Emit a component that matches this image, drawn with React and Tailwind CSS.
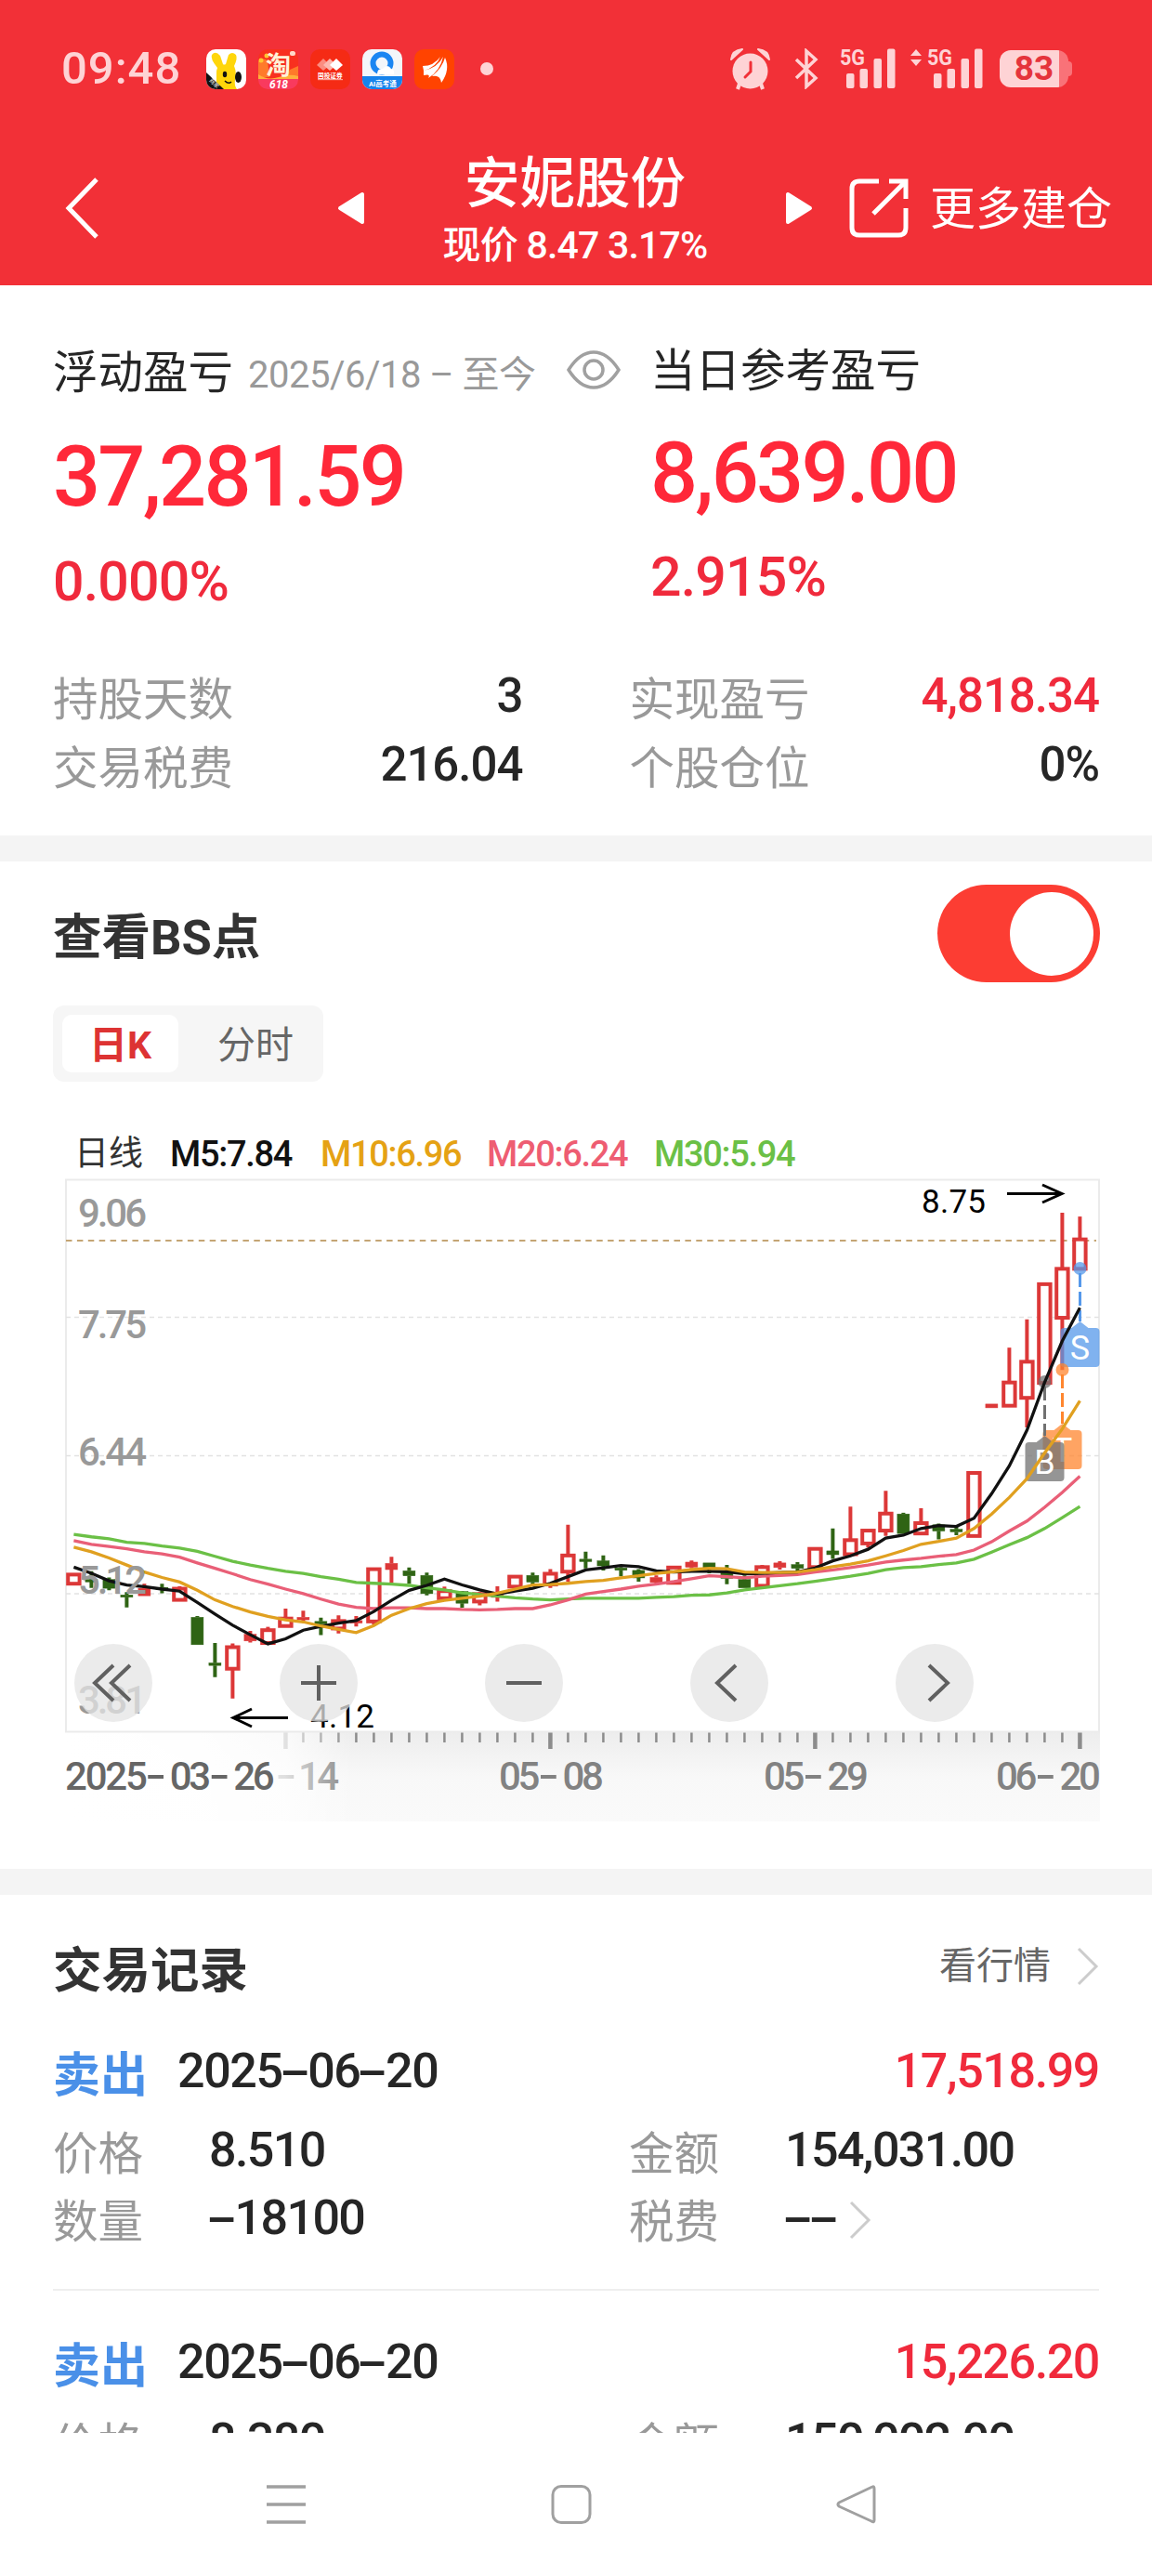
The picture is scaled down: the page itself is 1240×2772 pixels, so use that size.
import { Fragment } from 'react'

const STEP = 19
const X0 = 79.4
const cx = i => X0 + i * STEP
const cy = v => v / 2.24

// kind: r = hollow up, f = filled up, g = down | high, body top, body bottom, low
const candles = [
  ['r', 971, 973, 995, 998], ['g', 965, 985, 990, 1005], ['g', 980, 985, 1006, 1011], ['g', 1015, 1022, 1027, 1052],
  ['f', 995, 1006, 1024, 1024], ['g', 995, 1004, 1009, 1018], ['r', 1001, 1007, 1034, 1034], ['g', 1073, 1076, 1142, 1142],
  ['g', 1138, 1186, 1192, 1220], ['r', 1139, 1148, 1200, 1272], ['f', 1109, 1117, 1133, 1137], ['r', 1099, 1107, 1138, 1138],
  ['r', 1055, 1079, 1097, 1097], ['f', 1060, 1076, 1082, 1085], ['g', 1077, 1086, 1092, 1119], ['r', 1071, 1085, 1103, 1115],
  ['f', 1073, 1084, 1090, 1098], ['r', 957, 960, 1086, 1093], ['f', 930, 946, 961, 993], ['g', 956, 964, 976, 995],
  ['g', 968, 975, 1019, 1023], ['r', 1002, 1013, 1030, 1030], ['g', 1013, 1014, 1042, 1053], ['r', 1015, 1020, 1038, 1047],
  ['f', 1001, 1015, 1028, 1038], ['r', 978, 978, 1002, 1002], ['g', 968, 975, 991, 1000], ['r', 960, 971, 997, 1005],
  ['r', 853, 927, 966, 990], ['g', 918, 936, 941, 958], ['g', 927, 940, 952, 963], ['g', 955, 957, 962, 977],
  ['g', 960, 963, 981, 990], ['f', 975, 980, 992, 997], ['r', 953, 956, 993, 995], ['f', 939, 943, 955, 958],
  ['g', 945, 945, 958, 970], ['g', 950, 966, 982, 996], ['g', 975, 985, 1005, 1005], ['r', 950, 955, 1000, 1000],
  ['f', 941, 945, 956, 961], ['g', 943, 949, 958, 965], ['r', 909, 911, 955, 960], ['g', 862, 916, 925, 935],
  ['r', 809, 890, 924, 927], ['r', 865, 867, 898, 908], ['r', 771, 826, 867, 880], ['g', 824, 827, 874, 874],
  ['r', 813, 849, 874, 878], ['g', 850, 853, 868, 888], ['g', 855, 864, 870, 878], ['r', 727, 728, 880, 880],
  ['f', 562, 562, 571, 571], ['r', 426, 510, 566, 566], ['r', 358, 460, 547, 618], ['r', 270, 273, 511, 511],
  ['r', 101, 236, 354, 480], ['r', 110, 165, 236, 236],
]

const averages = [
  { color: '#6bc046', values: [876, 882, 887, 895, 898, 904, 909, 917, 929, 941, 950, 958, 965, 970, 978, 984, 992, 994, 996, 999, 1005, 1010, 1017, 1021, 1025, 1029, 1032, 1034, 1032, 1030, 1030, 1030, 1030, 1028, 1026, 1023, 1022, 1017, 1010, 1005, 1000, 995, 989, 983, 977, 970, 961, 956, 954, 949, 945, 936, 919, 901, 884, 862, 836, 809] },
  { color: '#e95f77', values: [891, 900, 905, 911, 918, 923, 931, 945, 958, 971, 985, 996, 1008, 1019, 1032, 1044, 1052, 1055, 1053, 1053, 1055, 1055, 1057, 1058, 1057, 1055, 1055, 1046, 1034, 1020, 1014, 1008, 1001, 996, 990, 983, 976, 978, 981, 977, 975, 973, 967, 962, 956, 950, 943, 938, 934, 929, 925, 914, 894, 868, 844, 811, 775, 736] },
  { color: '#111111', values: [955, 970, 988, 998, 1002, 1008, 1013, 1040, 1068, 1095, 1118, 1140, 1128, 1107, 1098, 1090, 1084, 1062, 1035, 1011, 999, 984, 998, 1010, 1020, 1013, 1006, 994, 978, 962, 957, 951, 954, 964, 967, 965, 965, 966, 971, 970, 968, 967, 957, 940, 928, 912, 885, 878, 862, 855, 857, 837, 778, 711, 625, 510, 410, 330] },
  { color: '#e0a020', values: [907, 918, 933, 950, 967, 980, 991, 1011, 1034, 1050, 1063, 1074, 1082, 1087, 1097, 1105, 1113, 1096, 1071, 1055, 1043, 1035, 1030, 1025, 1018, 1008, 998, 997, 994, 990, 987, 981, 976, 970, 966, 961, 958, 959, 967, 968, 968, 967, 961, 954, 948, 940, 928, 915, 900, 893, 885, 862, 827, 787, 742, 680, 622, 554] },
]

const priceLabels = [['9.06', 60], ['7.75', 180], ['6.44', 317], ['5.12', 455], ['3.81', 584]]
const dateLabels = [['05-08', 537], ['05-29', 822], ['06-20', 1072]]

const legend = [
  ['M5:7.84', 'text-[#111111] w-[162px]'],
  ['M10:6.96', 'text-[#e5a214] w-[179px]'],
  ['M20:6.24', 'text-[#ee5d72] w-[180px]'],
  ['M30:5.94', 'text-[#6bc046]'],
]

const records = [
  { date: '2025-06-20', profit: '17,518.99', price: '8.510', amount: '154,031.00', count: '-18100' },
  { date: '2025-06-20', profit: '15,226.20', price: '8.380', amount: '150,002.00', count: '-17900' },
]

// Hyphens are as wide as a digit in this type
const Num = ({ children, className = '' }) => (
  <span className={`font-medium whitespace-nowrap ${className}`}>
    {children.split('-').map((part, i) => (
      <Fragment key={i}>
        {i > 0 && <span className="inline-block w-[0.53em] text-center tracking-normal scale-x-[1.9]">-</span>}
        {part}
      </Fragment>
    ))}
  </span>
)

const Chevron = ({ className }) => (
  <svg viewBox="0 0 24 42" className={`w-6 h-[42px] ${className}`} fill="none" stroke="#cccccc" strokeWidth="3">
    <path d="M2 2 L21 21 L2 40" />
  </svg>
)

const Signal = () => (
  <svg width="62" height="44" viewBox="0 0 62 44" fill="#fed3d5">
    <text x="0" y="18" fontSize="23" fontWeight="700" textLength="27" lengthAdjust="spacingAndGlyphs">5G</text>
    <rect x="7" y="27" width="8.5" height="16" rx="2" />
    <rect x="21.5" y="22" width="8.5" height="21" rx="2" />
    <rect x="36.5" y="11" width="8.5" height="32" rx="2" />
    <rect x="51" y="0.5" width="8.5" height="42.5" rx="2" />
  </svg>
)

const AppIcons = () => (
  <div className="flex gap-[13px] ml-[29px]">
    <svg width="43" height="43" viewBox="0 0 43 43" className="rounded-[10px] bg-white">
      <path d="M11 43 L11 26 Q11 22 12 20 Q4 10 6 6 Q10 1 15 7 L18 16 Q19 17 21 16 L24 6 Q28 2 32 6 Q34 10 30 18 Q33 25 31 33 Q30 39 33 43 Z" fill="#ffd60a" />
      <path d="M0 25 L19 43 H0 Z" fill="#111" />
      <ellipse cx="20" cy="27" rx="2.2" ry="3.2" fill="#111" />
      <ellipse cx="34.5" cy="30" rx="3.5" ry="6" fill="#111" />
      <path d="M20 34 Q24 38 27 35" stroke="#111" strokeWidth="1.5" fill="none" />
      <text x="3" y="34" fontSize="6" fill="#fff" transform="rotate(44 3 34)">商家</text>
    </svg>
    <svg width="43" height="43" viewBox="0 0 43 43" className="rounded-[10px] bg-[#f8301f]">
      <path d="M0 13 Q4 8 10 12 L12 30 H0 Z" fill="#ff7a2a" />
      <path d="M43 18 L34 22 L30 32 H43 Z" fill="#ff7a2a" />
      <circle cx="9" cy="7" r="2.5" fill="#ffc531" />
      <circle cx="3" cy="12" r="2.5" fill="#ffc531" />
      <rect x="34" y="2" width="6" height="5" rx="2" fill="#ffd9c9" />
      <path d="M0 27 Q10 34 22 30 Q34 26 43 29 V33 H0 Z" fill="#ffb03b" />
      <rect y="32" width="43" height="11" fill="#f93a5e" />
      <text x="8" y="27" fontSize="27" fontWeight="700" fill="#fff3d8">淘</text>
      <text x="12" y="42" fontSize="12" fontStyle="italic" fontWeight="700" fill="#fff">618</text>
    </svg>
    <svg width="43" height="43" viewBox="0 0 43 43" className="rounded-[10px] bg-[#f52b15]">
      <path d="M7 17 L14 10 L21 17 L14 23 Z" fill="#fb8d80" />
      <path d="M14 17 L21 10 L28 17 L21 23 Z" fill="#fcb8af" />
      <path d="M21 17 L28 10 L35 17 L28 23 Z" fill="#fff" />
      <text x="8" y="31" fontSize="6.7" fontWeight="700" fill="#fff">国投证券</text>
      <rect x="8" y="32" width="27" height="1.2" fill="#fb9d92" />
    </svg>
    <svg width="43" height="43" viewBox="0 0 43 43" className="rounded-[10px] bg-[#f3f6fa]">
      <circle cx="21" cy="15" r="9.5" fill="none" stroke="#1b86f2" strokeWidth="6" />
      <path d="M16 27 Q16 20 22 21 Q27 15 31 21 Q35 22 34 27 H16 Z" fill="#fff" />
      <rect y="29" width="43" height="14" fill="#1683ec" />
      <text x="7" y="40" fontSize="7.5" fontWeight="700" fill="#fff">AI高考通</text>
    </svg>
    <svg width="43" height="43" viewBox="0 0 43 43" className="rounded-[10px] bg-[#ff4300]">
      <path d="M9 18 Q21 18 28 8 Q24 19 10 23 Z M10 23 Q25 20 31 8 Q28 23 15 31 Q18 26 10 28 Z M19 29 Q30 20 33 9 Q39 22 29 36 Q28 27 19 29 Z" fill="#fff" />
    </svg>
  </div>
)

const StatusBar = () => (
  <div className="flex items-center h-[148px] pl-[66px] text-[#fed3d5]">
    <span className="w-[127px] text-[49px] font-medium tracking-[1px]">09:48</span>
    <AppIcons />
    <span className="size-3.5 rounded-full bg-[#fed3d5] ml-7" />
    <div className="flex items-center ml-[255px]">
      <svg width="43" height="45" viewBox="0 0 43 45" fill="#fed3d5">
        <circle cx="21.5" cy="24.5" r="19" />
        <path d="M1 12 Q2 2 13 1 L1 12 Z M42 12 Q41 2 30 1 L42 12 Z" stroke="#fed3d5" strokeWidth="2" strokeLinejoin="round" />
        <path d="M10 38 L8 44 M33 38 L35 44" stroke="#fed3d5" strokeWidth="4" />
        <path d="M22 15 V25 L16 31" fill="none" stroke="#f13037" strokeWidth="3" strokeLinecap="round" />
      </svg>
      <svg width="26" height="44" viewBox="0 0 26 44" className="ml-[26px]" fill="none" stroke="#fed3d5" strokeWidth="3.5">
        <path d="M2 12 L23 32 L13 41 V3 L23 12 L2 32" />
      </svg>
      <div className="ml-[23px]"><Signal /></div>
      <svg width="12" height="18" viewBox="0 0 12 18" className="ml-[14px] mb-6" fill="#fed3d5">
        <path d="M0 7 L6 0 L12 7 Z M0 11 L6 18 L12 11 Z" />
      </svg>
      <div className="ml-1.5"><Signal /></div>
      <div className="flex items-center ml-4">
        <div className="flex items-center justify-center w-[74px] h-10 rounded-xl bg-linear-to-r from-[#fed3d5] from-[86%] to-[#f97278] to-[86%]">
          <span className="text-[37px] leading-10 font-bold text-[#e5343c]">83</span>
        </div>
        <span className="w-1 h-4 rounded-r bg-[#f97278]" />
      </div>
    </div>
  </div>
)

const Header = () => (
  <header className="h-[307px] bg-[#f23037] text-white">
    <StatusBar />
    <div className="flex items-center h-[152px] pl-[70px]">
      <svg width="36" height="66" viewBox="0 0 36 66" fill="none" stroke="#fff" strokeWidth="5">
        <path d="M34 2 L4 33 L34 64" />
      </svg>
      <svg width="31" height="36" viewBox="0 0 31 36" className="ml-64" fill="#fff" stroke="#fff" strokeWidth="4" strokeLinejoin="round">
        <path d="M28 3 V33 L4 18 Z" />
      </svg>
      <div className="flex flex-col items-center w-[452px] mt-3">
        <h1 className="text-[59.5px] leading-[68px] font-medium">安妮股份</h1>
        <p className="text-[41px] leading-[64px] font-medium tracking-[-0.8px]">现价 8.47 3.17%</p>
      </div>
      <svg width="31" height="36" viewBox="0 0 31 36" fill="#fff" stroke="#fff" strokeWidth="4" strokeLinejoin="round">
        <path d="M3 3 V33 L27 18 Z" />
      </svg>
      <svg width="66" height="64" viewBox="0 0 66 64" className="ml-[38px]" fill="none" stroke="#fff" strokeWidth="5">
        <path d="M32 3 H11 Q3 3 3 11 V53 Q3 61 11 61 H53 Q61 61 61 53 V32" />
        <path d="M43 3 H61 V22 M61 3 L26 38" />
      </svg>
      <span className="ml-[21px] pt-1 text-[49px] leading-[60px] whitespace-nowrap">更多建仓</span>
    </div>
  </header>
)

const Metric = ({ label, value, red }) => (
  <div className="flex items-center justify-between h-[74px]">
    <span className="pt-[7px] text-[48.5px] leading-[60px] text-[#999999]">{label}</span>
    <Num className={`pb-0.5 text-[51px] leading-[60px] tracking-[-1px] ${red ? 'text-[#f02a3c]' : 'text-[#262626]'}`}>{value}</Num>
  </div>
)

const Summary = () => (
  <section className="h-[592px] px-[57px]">
    <div className="flex h-[348px]">
      <div className="w-[643px] pt-[63px]">
        <div className="flex items-center h-[60px]">
          <span className="pt-[3px] text-[48.5px] leading-[60px] text-[#262626]">浮动盈亏</span>
          <span className="ml-4 pt-2 text-[40px] leading-[54px] tracking-[-0.5px] text-[#999999] whitespace-nowrap">2025/6/18 – 至今</span>
          <svg width="58" height="42" viewBox="0 0 58 42" className="ml-auto mr-8 -mt-1" fill="none" stroke="#a0a0a0" strokeWidth="3.5">
            <path d="M2 21 Q14 2 29 2 Q44 2 56 21 Q44 40 29 40 Q14 40 2 21 Z" />
            <circle cx="29" cy="21" r="10" />
          </svg>
        </div>
        <p className="mt-[34px] text-[90px] leading-[100px] font-medium tracking-[-2.8px] text-[#ff2839]">37,281.59</p>
        <p className="mt-[31px] text-[59px] leading-[61px] font-medium tracking-[-0.8px] text-[#f02a3c]">0.000%</p>
      </div>
      <div className="pt-[61px]">
        <p className="pt-[3px] text-[48.5px] leading-[57px] text-[#262626]">当日参考盈亏</p>
        <p className="mt-8 text-[90px] leading-[100px] font-medium tracking-[-2.8px] text-[#ff2839]">8,639.00</p>
        <p className="mt-[31px] text-[59px] leading-[60px] font-medium tracking-[-0.8px] text-[#f02a3c]">2.915%</p>
      </div>
    </div>
    <div className="grid grid-cols-2 gap-x-[115px] mt-[58px]">
      <Metric label="持股天数" value="3" />
      <Metric label="实现盈亏" value="4,818.34" red />
      <Metric label="交易税费" value="216.04" />
      <Metric label="个股仓位" value="0%" />
    </div>
  </section>
)

const Marker = ({ x, y, dotY, color, letter }) => (
  <g>
    <circle cx={x} cy={dotY} r="7" fill={color} fillOpacity="0.75" />
    <path d={`M${x} ${dotY + 5} V${y}`} stroke={color} strokeWidth="3" strokeDasharray="15 5" />
    <path d={`M${x} ${y} l9 7 h8 q4 0 4 4 v34 q0 4 -4 4 h-34 q-4 0 -4 -4 v-34 q0 -4 4 -4 h8 Z`} fill={color} fillOpacity="0.75" />
    <text x={x} y={y + 41} textAnchor="middle" fontSize="36" fill="#fff">{letter}</text>
  </g>
)

const RoundButton = ({ x, d }) => (
  <g>
    <circle cx={x} cy="551" r="42" fill="#e4e4e4" fillOpacity="0.75" />
    <path d={d} transform={`translate(${x} 551)`} fill="none" stroke="#606060" strokeWidth="4" />
  </g>
)

// Each part and each hyphen gets its own width
const DateLabel = ({ x, children, fill }) => {
  let left = x
  return (
    <g fontSize="42" fontWeight="500" fill={fill}>
      {children.split('-').map((part, i) => {
        const width = part.length * 22.2
        const dash = left - 2
        if (i > 0) left += 24
        const start = left
        left += width
        return (
          <Fragment key={i}>
            {i > 0 && <text x={dash} y="665" textLength="22" lengthAdjust="spacingAndGlyphs">-</text>}
            <text x={start} y="666" textLength={width}>{part}</text>
          </Fragment>
        )
      })}
    </g>
  )
}

const Chart = () => (
  <svg width="1240" height="700" viewBox="0 0 1240 700" className="block">
    <defs>
      <linearGradient id="axisFade" x1="0" x2="0" y1="0" y2="1">
        <stop offset="0" stopColor="#ededed" />
        <stop offset="0.5" stopColor="#f8f8f8" />
        <stop offset="1" stopColor="#fafafa" />
      </linearGradient>
      <linearGradient id="leftFade">
        <stop offset="0" stopColor="#fff" />
        <stop offset="0.45" stopColor="#fff" stopOpacity="0.95" />
        <stop offset="0.76" stopColor="#fff" stopOpacity="0.75" />
        <stop offset="1" stopColor="#fff" stopOpacity="0" />
      </linearGradient>
    </defs>

    {/* Date axis */}
    <rect x="71" y="604" width="1113" height="96" fill="url(#axisFade)" />
    {candles.map((_, i) => i >= 12 && (
      <path key={i} d={`M${cx(i)} 604 v${(i - 12) % 15 === 0 ? 18 : 11}`} stroke="#8c8c8c" strokeWidth={(i - 12) % 15 === 0 ? 4.5 : 2.5} />
    ))}
    <text x="297" y="665" fontSize="42" fontWeight="500" fill="#828282" textLength="22" lengthAdjust="spacingAndGlyphs">-</text>
    <text x="321" y="666" fontSize="42" fontWeight="500" fill="#828282" textLength="44">14</text>
    <rect x="71" y="604" width="310" height="96" fill="url(#leftFade)" />

    {/* Frame and grid */}
    <rect x="71" y="9.5" width="1112" height="594" fill="none" stroke="#ebebeb" strokeWidth="2" />
    {[157.5, 306.5, 455].map(y => (
      <path key={y} d={`M71 ${y} H1183`} stroke="#e2e2e2" strokeWidth="1.5" strokeDasharray="5 4" />
    ))}
    <path d="M71 75 H1180" stroke="#c4a574" strokeWidth="1.8" strokeDasharray="6.5 5.4" />

    {candles.map(([kind, high, top, bottom, low], i) => {
      const x = cx(i)
      const color = kind === 'g' ? '#2f6414' : '#dc3838'
      const hollow = kind === 'r'
      const h = Math.max(cy(bottom - top), 2.5)
      return (
        <g key={i} stroke={color} fill={color}>
          <path d={`M${x} ${cy(high)} V${cy(top)} M${x} ${cy(bottom)} V${cy(low)}`} strokeWidth="4" />
          {hollow
            ? <rect x={x - 6.2} y={cy(top)} width="12.4" height={h} fill="#fff" strokeWidth="4" />
            : <rect x={x - 6.5} y={cy(top)} width="13" height={h} strokeWidth="0.5" />}
        </g>
      )
    })}

    <Marker x={1162.5} y={162} dotY={105} color="#5598ea" letter="S" />
    <Marker x={1143.5} y={272} dotY={214} color="#ff862f" letter="T" />
    <Marker x={1124.5} y={285} dotY={227} color="#717171" letter="B" />

    {averages.map(({ color, values }) => (
      <polyline key={color} points={values.map((v, i) => `${cx(i)},${cy(v)}`).join(' ')} fill="none" stroke={color} strokeWidth="3.3" />
    ))}

    {priceLabels.map(([label, y]) => (
      <text key={label} x="84" y={y} fontSize="42" fontWeight="500" fill="#999999" textLength="74">{label}</text>
    ))}

    {/* High and low annotations */}
    <text x="992" y="45" fontSize="35" textLength="69">8.75</text>
    <path d="M1084 24.5 H1142 M1122 15 L1143 24.5 L1122 34" fill="none" stroke="#000" strokeWidth="3" />
    <text x="334" y="599" fontSize="35" textLength="69">4.12</text>
    <path d="M310 588.5 H252 M271 579 L251 588.5 L271 598" fill="none" stroke="#000" strokeWidth="3" />

    <RoundButton x={122} d="M0 -19 L-20 0 L0 19 M18 -19 L-2 0 L18 19" />
    <RoundButton x={343} d="M-19 0 H19 M0 -19 V19" />
    <RoundButton x={564} d="M-19 0 H19" />
    <RoundButton x={785} d="M7 -19 L-13 0 L7 19" />
    <RoundButton x={1006} d="M-6 -19 L14 0 L-6 19" />

    <DateLabel x={70} fill="#666666">2025-03-26</DateLabel>
    {dateLabels.map(([label, x]) => (
      <DateLabel key={label} x={x} fill="#828282">{label}</DateLabel>
    ))}
  </svg>
)

const ChartSection = () => (
  <section className="h-[1084px] pt-[25px]">
    <div className="flex items-center justify-between h-[105px] pl-[57px] pr-14">
      <h2 className="pt-2 text-[52.5px] leading-[60px] font-bold text-[#333333]">查看BS点</h2>
      <div className="flex items-center justify-end w-[175px] h-[105px] pr-[7px] rounded-full bg-[#fc3d33]">
        <span className="size-[90px] rounded-full bg-white" />
      </div>
    </div>
    <div className="flex items-center w-[291px] h-[82px] ml-[57px] mt-[25px] p-2.5 rounded-xl bg-[#f6f6f6] text-[41px] leading-[58px]">
      <span className="flex items-center justify-center w-[125px] h-[62px] pt-1 rounded-[10px] bg-white font-bold text-[#dd3333]">日K</span>
      <span className="ml-[42px] pt-1 text-[#666666]">分时</span>
    </div>
    <div className="flex items-center h-[42px] mt-[54px] pt-1 pl-[80px] text-[38px] leading-[42px]">
      <span className="w-[103px] pt-0.5 text-[37px] text-[#333333]">日线</span>
      {legend.map(([label, style]) => (
        <span key={label} className={`pt-0.5 font-medium tracking-[-1.3px] ${style}`}>{label}</span>
      ))}
    </div>
    <Chart />
  </section>
)

const Field = ({ label, children }) => (
  <div className="flex items-center h-[73px]">
    <span className="w-[168px] pt-1.5 text-[48.5px] leading-[60px] tracking-normal text-[#999999]">{label}</span>
    {children}
  </div>
)

const Trade = ({ trade }) => (
  <div className="pt-[38px] pb-[38px] border-b-2 border-[#eeeeee]">
    <div className="flex items-center h-20">
      <span className="w-[134px] pt-[7px] text-[51px] leading-[60px] font-bold text-[#4a90e8]">卖出</span>
      <Num className="pb-[3px] text-[52px] leading-[60px] tracking-[-1.4px] text-[#262626]">{trade.date}</Num>
      <Num className="ml-auto pb-[3px] text-[52px] leading-[60px] tracking-[-1.4px] text-[#f02a3c]">{trade.profit}</Num>
    </div>
    <div className="grid grid-cols-[620px_1fr] mt-[9px] text-[52px] leading-[60px] tracking-[-1.6px] text-[#262626]">
      <Field label="价格"><Num className="pb-[3px]">{trade.price}</Num></Field>
      <Field label="金额"><Num className="pb-[3px]">{trade.amount}</Num></Field>
      <Field label="数量"><Num className="pb-[3px]">{trade.count}</Num></Field>
      <Field label="税费">
        <Num className="pb-[3px]">--</Num>
        <Chevron className="ml-3.5" />
      </Field>
    </div>
  </div>
)

const Trades = () => (
  <section className="h-[579px] pt-[50px] px-[57px] overflow-hidden">
    <div className="flex items-center justify-between h-[60px] mb-[3px]">
      <h2 className="pt-[3px] text-[52.5px] leading-[60px] font-bold text-[#333333]">交易记录</h2>
      <div className="flex items-center pb-1.5 text-[40px] leading-[54px] text-[#666666]">
        看行情
        <Chevron className="ml-7" />
      </div>
    </div>
    {records.map(trade => <Trade key={trade.profit} trade={trade} />)}
  </section>
)

const NavBar = () => (
  <nav className="flex h-[154px] pt-[55px] pl-[286px] gap-[263px]">
    <svg width="44" height="44" viewBox="0 0 44 44" stroke="#a0a0a0" strokeWidth="3.5">
      <path d="M1 3 H43 M1 22 H43 M1 41 H43" />
    </svg>
    <svg width="44" height="44" viewBox="0 0 44 44" fill="none" stroke="#a0a0a0" strokeWidth="3">
      <rect x="2" y="2.5" width="40" height="39" rx="9" />
    </svg>
    <svg width="44" height="44" viewBox="0 0 44 44" fill="none" stroke="#a0a0a0" strokeWidth="3" strokeLinejoin="round">
      <path d="M39 3 Q41 2 41 5 V39 Q41 42 38 40 L3 24 Q1 22 3 20 Z" />
    </svg>
  </nav>
)

const App = () => (
  <div className="w-[1240px] h-[2772px] overflow-hidden bg-white font-['Roboto','Noto_Sans_CJK_SC',sans-serif]">
    <Header />
    <Summary />
    <div className="h-7 bg-[#f4f4f4]" />
    <ChartSection />
    <div className="h-7 bg-[#f4f4f4]" />
    <Trades />
    <NavBar />
  </div>
)

export default App
